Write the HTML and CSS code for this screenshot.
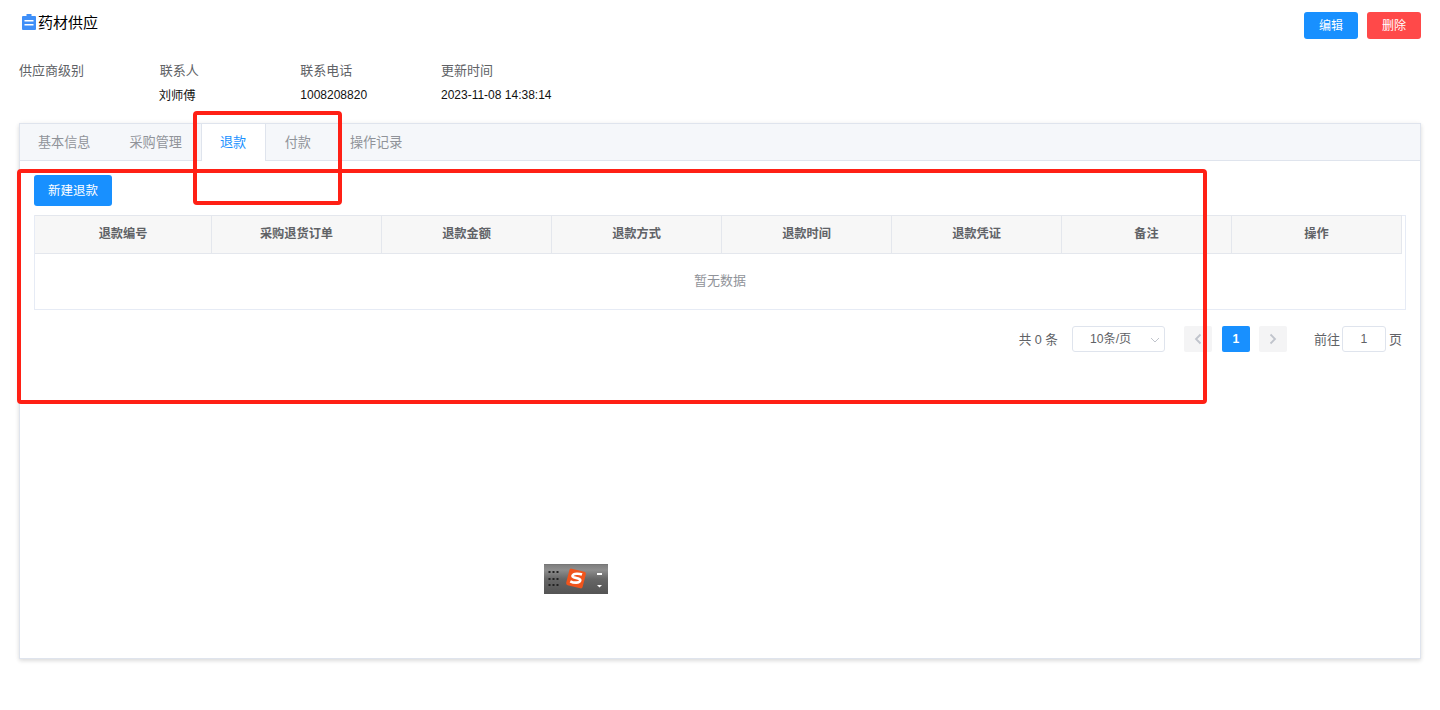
FILE: index.html
```html
<!DOCTYPE html>
<html lang="zh-CN">
<head>
<meta charset="utf-8">
<title>药材供应</title>
<link rel="stylesheet" href="styles.css">
</head>
<body>
<div class="page">
  <header class="top">
    <h1 class="title">
      <svg class="title-icon" width="14" height="16" viewBox="0 0 14 16"><path fill="#3f8ff8" d="M4.500 0h5v2H13a1 1 0 0 1 1 1v12a1 1 0 0 1-1 1H1a1 1 0 0 1-1-1V3a1 1 0 0 1 1-1h3.500z"/><path fill="#fff" d="M2.500 6h9v1.500h-9zM2.500 10h9v1.500h-9z"/></svg>
      <span>药材供应</span>
    </h1>
    <div class="actions">
      <button class="btn btn-primary btn-top">编辑</button>
      <button class="btn btn-danger btn-top">删除</button>
    </div>
  </header>

  <section class="info">
    <div class="info-col"><div class="info-label">供应商级别</div><div class="info-value"></div></div>
    <div class="info-col"><div class="info-label">联系人</div><div class="info-value info-name">刘师傅</div></div>
    <div class="info-col"><div class="info-label">联系电话</div><div class="info-value">1008208820</div></div>
    <div class="info-col"><div class="info-label">更新时间</div><div class="info-value">2023-11-08 14:38:14</div></div>
  </section>

  <section class="card">
    <nav class="tabs">
      <div class="tab tab-wide">基本信息</div>
      <div class="tab">采购管理</div>
      <div class="tab tab-active">退款</div>
      <div class="tab tab-wide">付款</div>
      <div class="tab">操作记录</div>
    </nav>
    <div class="panel">
      <button class="btn btn-primary btn-new">新建退款</button>
      <div class="table">
        <div class="thead">
          <div class="th th-first">退款编号</div>
          <div class="th">采购退货订单</div>
          <div class="th">退款金额</div>
          <div class="th">退款方式</div>
          <div class="th">退款时间</div>
          <div class="th">退款凭证</div>
          <div class="th">备注</div>
          <div class="th">操作</div>
        </div>
        <div class="empty">暂无数据</div>
      </div>
      <div class="pager">
        <span class="pager-total">共 0 条</span>
        <div class="pager-select"><span>10条/页</span>
          <svg class="select-arrow" width="10" height="6" viewBox="0 0 10 6"><path d="M1 1l4 4 4-4" fill="none" stroke="#c0c4cc" stroke-width="1"/></svg>
        </div>
        <button class="page-btn page-prev"><svg width="8" height="12" viewBox="0 0 8 12"><path d="M6.500 1.500L2 6l4.500 4.500" fill="none" stroke="#c0c4cc" stroke-width="1.800"/></svg></button>
        <button class="page-btn page-current">1</button>
        <button class="page-btn page-next"><svg width="8" height="12" viewBox="0 0 8 12"><path d="M1.500 1.500L6 6l-4.500 4.500" fill="none" stroke="#c0c4cc" stroke-width="1.800"/></svg></button>
        <span class="pager-goto">前往</span>
        <div class="pager-input">1</div>
        <span class="pager-unit">页</span>
      </div>
    </div>
  </section>
</div>

<div class="mark mark-tabs"></div>
<div class="mark mark-panel"></div>

<svg class="ime" width="64" height="30" viewBox="0 0 64 30">
  <defs>
    <linearGradient id="imeBg" x1="0" y1="0" x2="0" y2="1">
      <stop offset="0" stop-color="#7c7c7c"/>
      <stop offset="0.2" stop-color="#8e8e8e"/>
      <stop offset="0.5" stop-color="#666"/>
      <stop offset="1" stop-color="#545454"/>
    </linearGradient>
  </defs>
  <rect width="64" height="30" fill="url(#imeBg)"/>
  <rect width="64" height="1" fill="#777"/>
  <g fill="#222">
    <rect x="4.500" y="7" width="2" height="2"/><rect x="8.500" y="7" width="2" height="2"/><rect x="12.500" y="7" width="2" height="2"/>
    <rect x="4.500" y="14" width="2" height="2"/><rect x="8.500" y="14" width="2" height="2"/><rect x="12.500" y="14" width="2" height="2"/>
    <rect x="4.500" y="20" width="2" height="2"/><rect x="8.500" y="20" width="2" height="2"/><rect x="12.500" y="20" width="2" height="2"/>
  </g>
  <rect x="23.500" y="6" width="17" height="17" rx="2" fill="#f0541c" transform="rotate(14 32 14.500)"/>
  <path d="M38 10.500c-2.500-1-8.500-1.500-9.500 1.200s8.500 1.800 7.800 4.800-6.800 2.500-10 .8" fill="none" stroke="#fff" stroke-width="2.600"/>
  <rect x="53" y="9" width="5" height="2" fill="#fff"/>
  <path d="M53 21h5l-2.500 2.500z" fill="#fff"/>
</svg>
</body>
</html>
```

FILE: styles.css
```css
* { box-sizing: border-box; }
html, body { margin: 0; padding: 0; background: #fff; }
body {
  font-family: "Liberation Sans", "Noto Sans CJK SC", sans-serif;
  color: #000;
  height: 710px;
  overflow: hidden;
  position: relative;
}
.page { padding: 12px 19px 0; }

.top { display: flex; justify-content: space-between; align-items: flex-start; height: 27px; }
.title { display: flex; align-items: center; gap: 2.500px; margin: 0 0 0 2.500px; font-size: 15px; font-weight: 400; line-height: 22px; color: #000; }
.title-icon { display: block; margin-top: -2px; }
.actions { display: flex; gap: 9px; }

.btn { border: 0; border-radius: 3px; color: #fff; font-family: inherit; padding: 0 0 2px; cursor: pointer; }
.btn-primary { background: #1890ff; }
.btn-danger { background: #ff4949; }
.btn-top { width: 54px; height: 27px; font-size: 12px; }
.btn-new { display: block; width: 78px; height: 31px; font-size: 12.500px; }

.info { display: flex; margin-top: 22px; }
.info-col { width: 140.670px; }
.info-label { font-size: 13px; line-height: 20px; color: #606266; }
.info-value { font-size: 12px; line-height: 20px; height: 20px; margin-top: 4px; color: #111; }
.info-name { font-size: 12.300px; line-height: 22px; margin-left: -1px; }

.card {
  margin-top: 18px;
  height: 536px;
  border: 1px solid #dfe4ed;
  background: #fff;
  box-shadow: 0 2px 4px rgba(0,0,0,.12), 0 0 6px rgba(0,0,0,.04);
}
.tabs { display: flex; height: 37px; background: #f5f7fa; border-bottom: 1px solid #dfe4ed; }
.tab {
  margin-left: -1px;
  padding: 0 19px 0 18px;
  height: 37px;
  line-height: 38px;
  font-size: 13.125px;
  color: #909399;
  border-left: 1px solid transparent;
  border-right: 1px solid transparent;
}
.tab-wide { padding-right: 20px; }
.tab-active { padding-right: 18.500px; background: #fff; color: #1890ff; border-left-color: #dfe4ed; border-right-color: #dfe4ed; }
.tab-active + .tab { padding-left: 19px; }

.panel { padding: 14px 14px 0; }

.table { margin-top: 9px; height: 95px; border: 1px solid #e6ebf5; }
.thead { display: flex; width: 1367px; height: 39px; background: #f7f7f7; border-bottom: 1px solid #e4e7ed; border-top: 1px solid #e4e7ed; margin-top: -1px; }
.th {
  flex: none;
  width: 170px;
  text-align: center;
  line-height: 36px;
  font-size: 12.200px;
  font-weight: 700;
  color: #606266;
  border-right: 1px solid #e4e7ed;
}
.th-first { width: 177px; }
.empty { height: 55px; line-height: 54px; text-align: center; font-size: 13px; color: #909399; }

.pager { display: flex; align-items: center; height: 26px; margin-top: 16px; padding-right: 4px; justify-content: flex-end; font-size: 13px; color: #606266; }
.pager-total { margin: 0 14px 2px 0; font-size: 12.600px; }
.pager-select {
  position: relative;
  width: 93px;
  height: 26px;
  line-height: 25px;
  padding-left: 17px;
  border: 1px solid #dfe4ed;
  border-radius: 3px;
  margin-right: 19px;
  font-size: 12.200px;
}
.select-arrow { position: absolute; right: 4px; top: 10px; }
.page-btn {
  display: flex;
  align-items: center;
  justify-content: center;
  width: 28px;
  height: 26px;
  border: 0;
  padding: 0;
  border-radius: 2px;
  background: #f4f4f5;
  font-family: inherit;
  font-size: 12.200px;
  font-weight: 700;
}
.page-current { background: #1890ff; color: #fff; margin: 0 9px 0 10px; }
.page-next { margin-right: 27px; }
.pager-goto { margin: 0 2px 2px 0; }
.pager-unit { margin-bottom: 2px; }
.pager-input {
  width: 44px;
  height: 26px;
  line-height: 24px;
  text-align: center;
  border: 1px solid #dfe4ed;
  border-radius: 3px;
  margin-right: 3px;
  font-size: 12.200px;
}

.mark { position: absolute; border: 4px solid #ff2015; border-radius: 4px; pointer-events: none; }
.mark-tabs { left: 193px; top: 111px; width: 149px; height: 94px; }
.mark-panel { left: 17px; top: 169px; width: 1190px; height: 235px; }

.ime { position: absolute; left: 544px; top: 564px; display: block; }
```
